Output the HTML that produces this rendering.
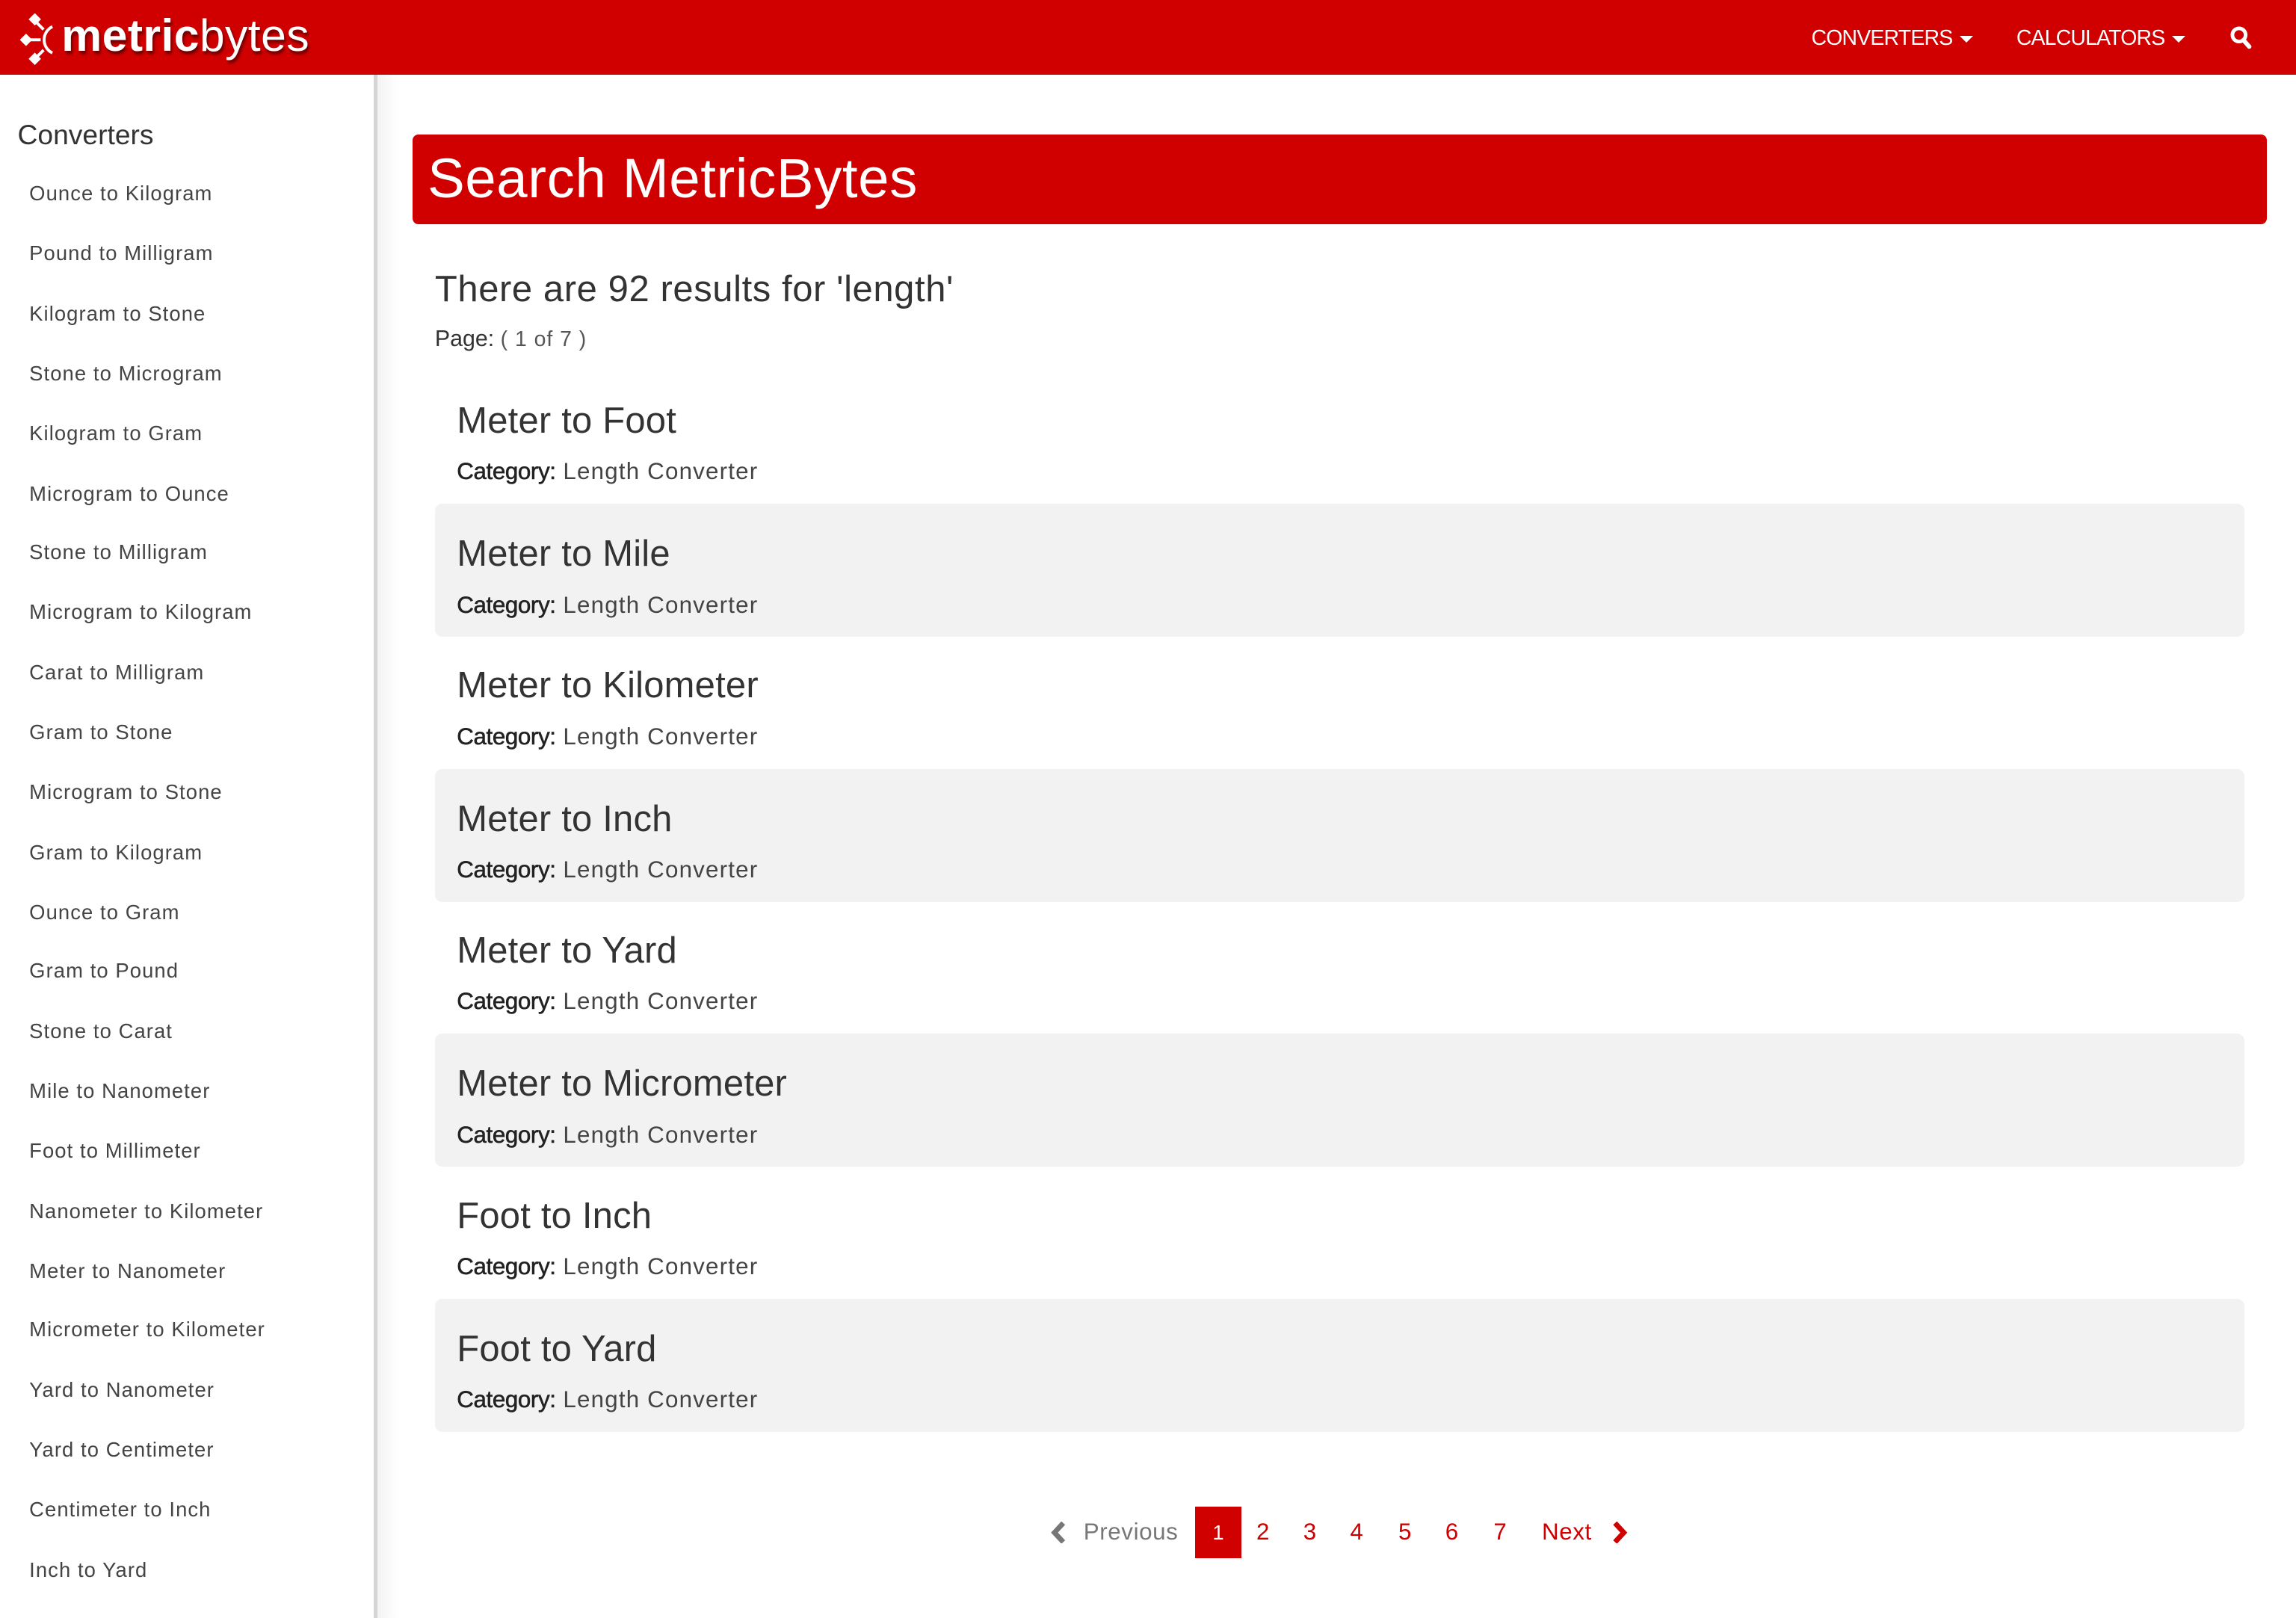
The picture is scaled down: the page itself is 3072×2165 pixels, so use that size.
<!DOCTYPE html>
<html><head><meta charset="utf-8">
<style>
html,body{margin:0;padding:0;background:#fff;}
body{width:3072px;height:2164px;overflow:hidden;position:relative;}
#w{position:absolute;left:0;top:0;width:1568px;height:1105px;zoom:1.9592;font-family:"Liberation Sans",sans-serif;color:#333;}
.hdr{position:absolute;left:0;top:0;width:1568px;height:51px;background:#d00000;}
.logo{position:absolute;left:42px;top:6px;color:#fff;font-size:31px;letter-spacing:0.2px;text-shadow:1px 2px 2px #600;}
.nav{position:absolute;top:18px;color:#fff;font-size:14.5px;letter-spacing:-0.4px;}
.tri{display:inline-block;width:0;height:0;border-left:5px solid transparent;border-right:5px solid transparent;border-top:5px solid #fff;vertical-align:middle;margin-left:5px;}
.side{position:absolute;left:0;top:51px;width:255px;height:1054px;border-right:3px solid #d4d4d4;}
.shadow{position:absolute;left:258px;top:51px;width:14px;height:1054px;background:linear-gradient(to right,#f3f3f3,#fff);}
.side h3{position:absolute;left:12px;margin:0;font-weight:normal;font-size:19px;letter-spacing:0px;color:#333;}
.si{position:absolute;left:20px;font-size:14px;color:#444;letter-spacing:0.55px;margin-top:1px;}
.banner{position:absolute;left:282px;top:92px;width:1266px;height:61px;background:#d00000;border-radius:4px;}
.banner span{position:absolute;left:10px;top:8px;color:#fff;font-size:38px;letter-spacing:0.3px;}
.res{position:absolute;left:297px;top:183px;font-size:25px;letter-spacing:0.3px;color:#333;}
.pg{position:absolute;left:297px;top:223px;font-size:15.5px;letter-spacing:0px;}
.item{position:absolute;left:297px;width:1236px;height:91px;border-radius:5px;}
.item.g{background:#f2f2f2;}
.item .t{position:absolute;left:15px;top:20px;font-size:25px;letter-spacing:0.1px;color:#333;}
.item .c{position:absolute;left:15px;top:60px;font-size:16px;letter-spacing:0.6px;color:#444;}
.item .c b{font-weight:normal;color:#222;letter-spacing:-0.2px;-webkit-text-stroke:0.3px #222;}
.pag{position:absolute;top:1037px;font-size:16px;color:#d00000;letter-spacing:0.3px;}
</style></head><body><div id="w">
<div class="hdr">
<svg style="position:absolute;left:14px;top:9px" width="28" height="36" viewBox="0 0 28 36">
<g fill="#fff"><rect x="7" y="1" width="6" height="6" transform="rotate(45 10 4)"/><rect x="1" y="15" width="6" height="6" transform="rotate(45 4 18)"/><rect x="7" y="28" width="6" height="6" transform="rotate(45 10 31)"/></g>
<g stroke="#fff" stroke-width="2" fill="none"><path d="M10 5 L16 11"/><path d="M5 18 L14 18"/><path d="M10 31 L16 25"/><path d="M22 9 A10 10 0 0 0 22 27"/></g></svg>
<div class="logo"><b>metric</b>bytes</div>
<div class="nav" style="left:1237px">CONVERTERS<span class="tri"></span></div>
<div class="nav" style="left:1377px">CALCULATORS<span class="tri"></span></div>
<svg style="position:absolute;left:1523px;top:18px" width="15" height="16" viewBox="0 0 15 16"><circle cx="6" cy="6" r="4.5" stroke="#fff" stroke-width="2.5" fill="none"/><path d="M9 9.5 L13 14" stroke="#fff" stroke-width="3" stroke-linecap="round"/></svg>
</div>
<div class="side"></div><div class="shadow"></div>
<div class="side" style="border:none">
<h3 style="top:30px">Converters</h3>
</div>
<div class="si" style="top:123px">Ounce to Kilogram</div>
<div class="si" style="top:164px">Pound to Milligram</div>
<div class="si" style="top:205px">Kilogram to Stone</div>
<div class="si" style="top:246px">Stone to Microgram</div>
<div class="si" style="top:287px">Kilogram to Gram</div>
<div class="si" style="top:328px">Microgram to Ounce</div>
<div class="si" style="top:368px">Stone to Milligram</div>
<div class="si" style="top:409px">Microgram to Kilogram</div>
<div class="si" style="top:450px">Carat to Milligram</div>
<div class="si" style="top:491px">Gram to Stone</div>
<div class="si" style="top:532px">Microgram to Stone</div>
<div class="si" style="top:573px">Gram to Kilogram</div>
<div class="si" style="top:614px">Ounce to Gram</div>
<div class="si" style="top:654px">Gram to Pound</div>
<div class="si" style="top:695px">Stone to Carat</div>
<div class="si" style="top:736px">Mile to Nanometer</div>
<div class="si" style="top:777px">Foot to Millimeter</div>
<div class="si" style="top:818px">Nanometer to Kilometer</div>
<div class="si" style="top:859px">Meter to Nanometer</div>
<div class="si" style="top:899px">Micrometer to Kilometer</div>
<div class="si" style="top:940px">Yard to Nanometer</div>
<div class="si" style="top:981px">Yard to Centimeter</div>
<div class="si" style="top:1022px">Centimeter to Inch</div>
<div class="si" style="top:1063px">Inch to Yard</div>

<div class="banner"><span>Search MetricBytes</span></div>
<div class="res">There are 92 results for 'length'</div>
<div class="pg">Page: <span style="color:#555;font-size:14.5px;letter-spacing:0.5px">( 1 of 7 )</span></div>

<div class="item" style="top:253px"><div class="t">Meter to Foot</div><div class="c"><b>Category:</b> Length Converter</div></div>
<div class="item g" style="top:344px"><div class="t">Meter to Mile</div><div class="c"><b>Category:</b> Length Converter</div></div>
<div class="item" style="top:434px"><div class="t">Meter to Kilometer</div><div class="c"><b>Category:</b> Length Converter</div></div>
<div class="item g" style="top:525px"><div class="t">Meter to Inch</div><div class="c"><b>Category:</b> Length Converter</div></div>
<div class="item" style="top:615px"><div class="t">Meter to Yard</div><div class="c"><b>Category:</b> Length Converter</div></div>
<div class="item g" style="top:706px"><div class="t">Meter to Micrometer</div><div class="c"><b>Category:</b> Length Converter</div></div>
<div class="item" style="top:796px"><div class="t">Foot to Inch</div><div class="c"><b>Category:</b> Length Converter</div></div>
<div class="item g" style="top:887px"><div class="t">Foot to Yard</div><div class="c"><b>Category:</b> Length Converter</div></div>

<svg style="position:absolute;left:717px;top:1039px" width="12" height="15" viewBox="0 0 12 15"><path d="M9 1 L3 7.5 L9 14" stroke="#777" stroke-width="3.5" fill="none"/></svg>
<div class="pag" style="left:740px;color:#777">Previous</div>
<div style="position:absolute;left:816px;top:1029px;width:32px;height:35px;background:#d00000;color:#fff;font-size:14px;text-align:center;line-height:36px">1</div>
<div class="pag" style="left:858px">2</div>
<div class="pag" style="left:890px">3</div>
<div class="pag" style="left:922px">4</div>
<div class="pag" style="left:955px">5</div>
<div class="pag" style="left:987px">6</div>
<div class="pag" style="left:1020px">7</div>
<div class="pag" style="left:1053px">Next</div>
<svg style="position:absolute;left:1100px;top:1039px" width="12" height="15" viewBox="0 0 12 15"><path d="M3 1 L9 7.5 L3 14" stroke="#d00000" stroke-width="3.5" fill="none"/></svg>
</div></body></html>
